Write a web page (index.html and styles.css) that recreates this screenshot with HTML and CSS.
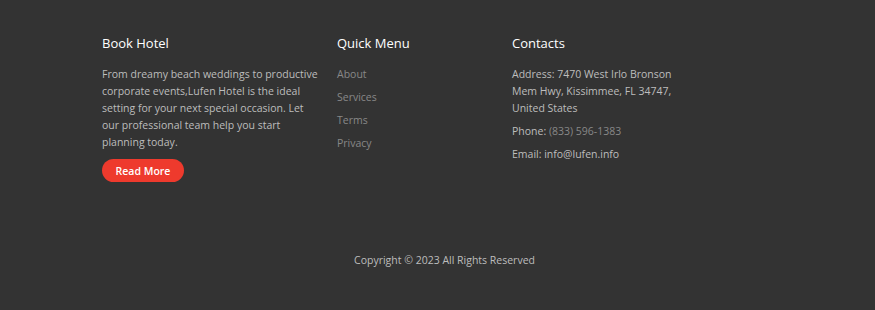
FILE: index.html
```html
<!DOCTYPE html>
<html lang="en">
<head>
  <meta charset="UTF-8">
  <title>Lufen Hotel</title>
  <link rel="stylesheet" href="styles.css">
</head>
<body>
  <footer class="footer">
    <div class="footer-inner">
      <div class="footer-cols">
        <section class="col col-about">
          <h4>Book Hotel</h4>
          <p>From dreamy beach weddings to productive corporate events,Lufen Hotel is the ideal setting for your next special occasion. Let our professional team help you start planning today.</p>
          <a href="#" class="btn-read">Read More</a>
        </section>

        <section class="col col-menu">
          <h4>Quick Menu</h4>
          <ul>
            <li><a href="#">About</a></li>
            <li><a href="#">Services</a></li>
            <li><a href="#">Terms</a></li>
            <li><a href="#">Privacy</a></li>
          </ul>
        </section>

        <section class="col col-contacts">
          <h4>Contacts</h4>
          <p>Address: 7470 West Irlo Bronson Mem Hwy, Kissimmee, FL 34747, United States</p>
          <p>Phone: <a href="#">(833) 596-1383</a></p>
          <p>Email: info@lufen.info</p>
        </section>
      </div>

      <p class="copyright">Copyright &copy; 2023 All Rights Reserved</p>
    </div>
  </footer>
</body>
</html>
```

FILE: styles.css
```css
body {
  margin: 0;
  padding: 0;
  background: #333333;
  color: #bdbdbd;
  font-family: 'Open Sans', 'Noto Sans', sans-serif;
  height: 100vh;
}
a {
  text-decoration: none;
}
.footer {
  padding-top: 33px;
}
.footer-inner {
  width: 671px;
  margin: 0 auto;
}
.footer-cols {
  display: grid;
  grid-template-columns: 235px 175px 1fr;
}
.col h4 {
  margin: 0 0 13px;
  font-size: 13px;
  font-weight: 500;
  line-height: 20px;
  color: #ffffff;
}
.col p {
  margin: 0;
  font-size: 10.5px;
  line-height: 17px;
}
.col-about p {
  width: 220px;
}
.btn-read {
  display: inline-flex;
  align-items: center;
  justify-content: center;
  margin-top: 8px;
  width: 82px;
  height: 23px;
  border-radius: 12px;
  background: #ee3a2d;
  color: #ffffff;
  font-size: 10.5px;
  font-weight: 600;
}
.col-menu ul {
  list-style: none;
  margin: 0;
  padding: 0;
  display: flex;
  flex-direction: column;
  gap: 6px;
}
.col-menu li {
  font-size: 10.5px;
  line-height: 17px;
}
.col-menu a {
  color: #888888;
}
.col-contacts p + p {
  margin-top: 6px;
}
.col-contacts p {
  width: 170px;
}
.col-contacts a {
  color: #888888;
}
.copyright {
  margin: 70px 0 0;
  padding-left: 14px;
  text-align: center;
  font-size: 10.5px;
  line-height: 17px;
  color: #bdbdbd;
}
```
